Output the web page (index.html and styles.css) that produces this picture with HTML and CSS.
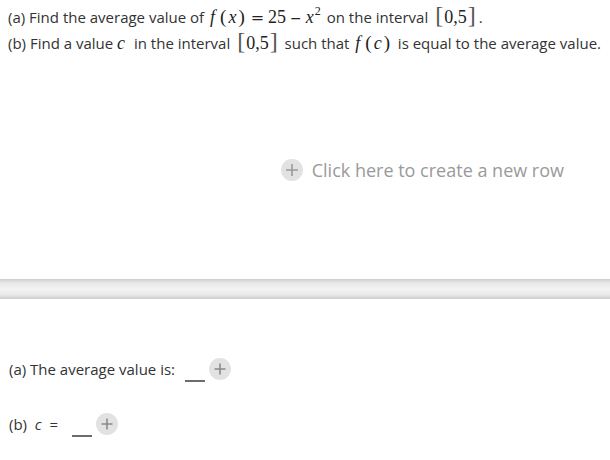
FILE: index.html
```html
<!DOCTYPE html>
<html>
<head>
<meta charset="utf-8">
<link rel="stylesheet" href="styles.css">
</head>
<body>
<div class="question">
  <div class="line">(a) Find the average value of <span class="math"><i class="mf">f</i><span class="par">(</span><i>x</i><span class="par">)</span><span class="op eq">=</span>25<span class="op mi">&minus;</span><i>x</i><sup>2</sup></span> on the interval <span class="math"><span class="brk">[</span>0,5<span class="brk">]</span></span>.</div>
  <div class="line">(b) Find a value <span class="math mc"><i>c</i></span> in the interval <span class="math"><span class="brk">[</span>0,5<span class="brk">]</span></span> such that <span class="math"><i class="mf">f</i><span class="par">(</span><i>c</i><span class="par">)</span></span> is equal to the average value.</div>
</div>
<div class="newrow">
  <span class="plus"><svg width="22" height="22" viewBox="0 0 22 22"><path d="M11 5v12M5 11h12" stroke="#9a9a9a" stroke-width="1.6"/></svg></span>
  <span class="newrow-text">Click here to create a new row</span>
</div>
<div class="divider"></div>
<div class="answers">
  <div class="answer a1">
    <span class="label">(a) The average value is:</span>
    <span class="blank"></span>
    <span class="plus"><svg width="22" height="22" viewBox="0 0 22 22"><path d="M11 5.5v11M5.5 11h11" stroke="#8a8a8a" stroke-width="1.6"/></svg></span>
  </div>
  <div class="answer a2">
    <span class="label">(b)&nbsp; <i class="ci">c</i>&nbsp; =</span>
    <span class="blank"></span>
    <span class="plus"><svg width="22" height="22" viewBox="0 0 22 22"><path d="M11 5.5v11M5.5 11h11" stroke="#8a8a8a" stroke-width="1.6"/></svg></span>
  </div>
</div>
</body>
</html>
```
FILE: styles.css
```css
html, body { margin: 0; padding: 0; background: #fff; }
body {
  font-family: "Open Sans", sans-serif;
  font-size: 15px;
  color: #333;
  width: 610px;
  height: 460px;
  overflow: hidden;
}
.question { padding: 4px 0 0 8px; }
.line { height: 26px; line-height: 26px; white-space: nowrap; }
.math {
  font-family: "Liberation Serif", "Times New Roman", serif;
  font-size: 18px;
  line-height: 0;
  margin: 0 2px;
  color: #222;
}
.mc { margin: 0 5px 0 0; }
.math i { font-style: italic; }
.mf { margin-right: 3px; }
.math sup { font-size: 12px; vertical-align: 8px; line-height: 0; margin-left: 1px; }
.par { font-size: 19px; padding: 0 2px; }
.op { font-family: "DejaVu Serif", serif; }
.eq { font-size: 16px; margin: 0 4px; }
.mi { font-size: 14px; margin: 0 4px; }
.brk { font-size: 24px; color: #555; padding: 0 1px; }
.newrow {
  display: flex;
  align-items: center;
  justify-content: flex-end;
  gap: 9px;
  margin-top: 101px;
  padding-right: 46px;
  height: 26px;
}
.newrow-text { font-size: 18px; color: #9a9a9a; }
.plus {
  width: 22px; height: 22px; border-radius: 50%;
  background: #e2e2e2;
  display: inline-flex; align-items: center; justify-content: center;
}
.plus svg { display: block; }
.divider {
  margin-top: 96px;
  height: 20px;
  background: linear-gradient(#cccccc, #e8e8e8 20%, #f3f3f3 50%, #e8e8e8 80%, #cccccc);
}
.answers { padding-left: 9px; }
.answer { display: flex; align-items: center; height: 24px; font-size: 15px; }
.a1 { margin-top: 58px; }
.a2 { margin-top: 31px; }
.blank {
  width: 20px; height: 0; border-bottom: 2px solid #6c6c6c;
  align-self: flex-end; margin: 0 4px -1px 10px;
}
.a2 .blank { margin-left: 14px; }
.ci { font-style: italic; }
```
